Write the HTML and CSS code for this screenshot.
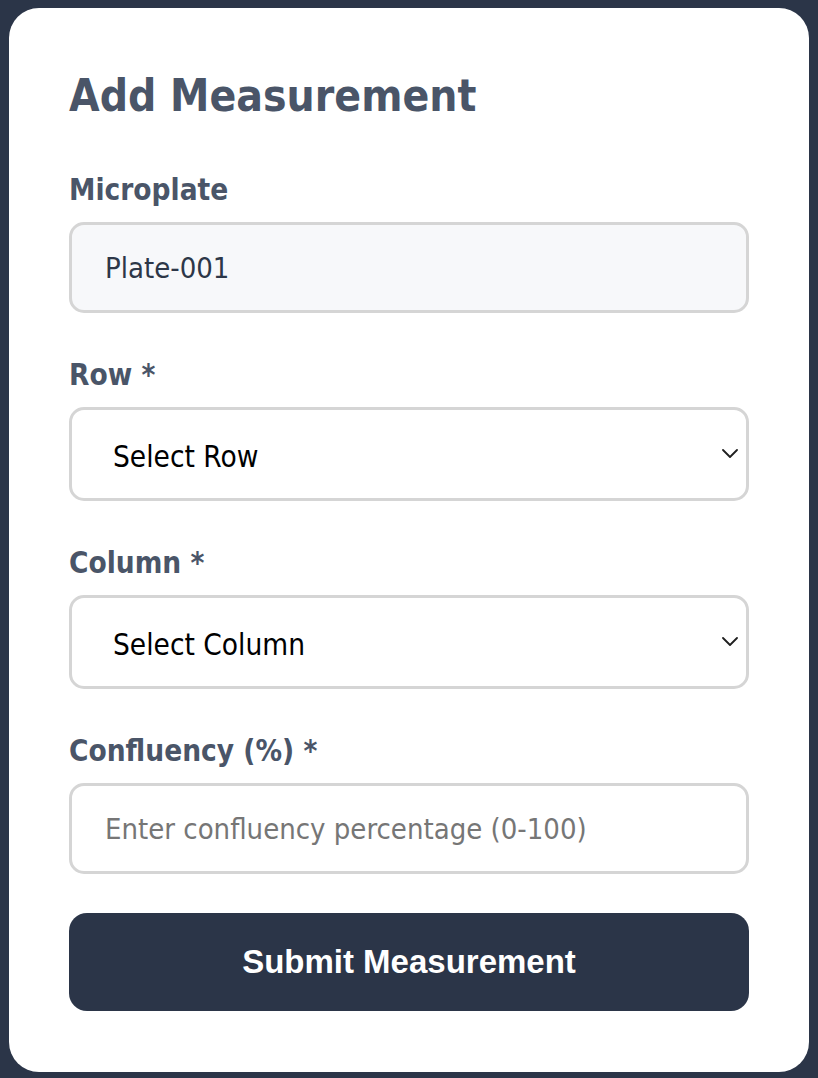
FILE: index.html
```html
<!DOCTYPE html>
<html lang="en">
<head>
<meta charset="utf-8">
<title>Add Measurement</title>
<link rel="stylesheet" href="styles.css">
</head>
<body>
<div class="card">
  <h2 class="title">Add Measurement</h2>
  <form class="form">
    <div class="group">
      <label class="label" for="plate">Microplate</label>
      <input class="field field-readonly" id="plate" type="text" value="Plate-001" readonly>
    </div>
    <div class="group">
      <label class="label" for="row">Row *</label>
      <div class="select-wrap">
        <select class="field select" id="row">
          <option>Select Row</option>
        </select>
        <svg class="chevron" width="16" height="9" viewBox="0 0 16 9"><polyline points="1,1 8,8 15,1" fill="none" stroke="#1f1f1f" stroke-width="1.8" stroke-linecap="round" stroke-linejoin="round"/></svg>
      </div>
    </div>
    <div class="group">
      <label class="label" for="col">Column *</label>
      <div class="select-wrap">
        <select class="field select" id="col">
          <option>Select Column</option>
        </select>
        <svg class="chevron" width="16" height="9" viewBox="0 0 16 9"><polyline points="1,1 8,8 15,1" fill="none" stroke="#1f1f1f" stroke-width="1.8" stroke-linecap="round" stroke-linejoin="round"/></svg>
      </div>
    </div>
    <div class="group">
      <label class="label" for="conf">Confluency (%) *</label>
      <input class="field" id="conf" type="text" placeholder="Enter confluency percentage (0-100)">
    </div>
    <button class="submit" type="button">Submit Measurement</button>
  </form>
</div>
</body>
</html>
```

FILE: styles.css
```css
html, body {
  margin: 0;
  padding: 0;
  background: #2b3548;
}

body {
  padding: 8px 0;
  font-family: "DejaVu Sans Condensed", "DejaVu Sans", sans-serif;
  font-stretch: condensed;
}

.card {
  box-sizing: border-box;
  width: 800px;
  margin: 0 auto;
  background: #ffffff;
  border-radius: 30px;
  padding: 60px 60px 61px;
}

.title {
  margin: 0 0 50px;
  font-size: 44px;
  line-height: 55px;
  font-weight: bold;
  color: #4a5568;
}

.form {
  display: flex;
  flex-direction: column;
}

.group {
  display: flex;
  flex-direction: column;
  margin-bottom: 45px;
}

.group:last-of-type {
  margin-bottom: 39px;
}

.label {
  font-size: 29.5px;
  line-height: 34px;
  font-weight: bold;
  color: #4a5568;
  margin-bottom: 15px;
}

.field {
  box-sizing: border-box;
  width: 100%;
  height: 91px;
  border: 3px solid #d5d5d5;
  border-radius: 15px;
  background: #ffffff;
  padding: 0 33px;
  font-family: "DejaVu Sans Condensed", "DejaVu Sans", sans-serif;
  font-stretch: condensed;
  font-size: 29px;
  color: #2d3748;
  outline: none;
}

.field::placeholder {
  color: #767676;
}

.field-readonly {
  background: #f7f8fa;
}

.select-wrap {
  position: relative;
}

.select {
  appearance: none;
  -webkit-appearance: none;
  height: 94px;
  padding: 6px 40px 0 41px;
  font-size: 29.5px;
  color: #000000;
}

.chevron {
  position: absolute;
  right: 11px;
  top: 42px;
  pointer-events: none;
}

.submit {
  height: 98px;
  border: none;
  border-radius: 18px;
  background: #2b3548;
  color: #ffffff;
  font-family: "Liberation Sans", Arial, sans-serif;
  font-weight: bold;
  font-size: 33px;
  cursor: pointer;
}
```
